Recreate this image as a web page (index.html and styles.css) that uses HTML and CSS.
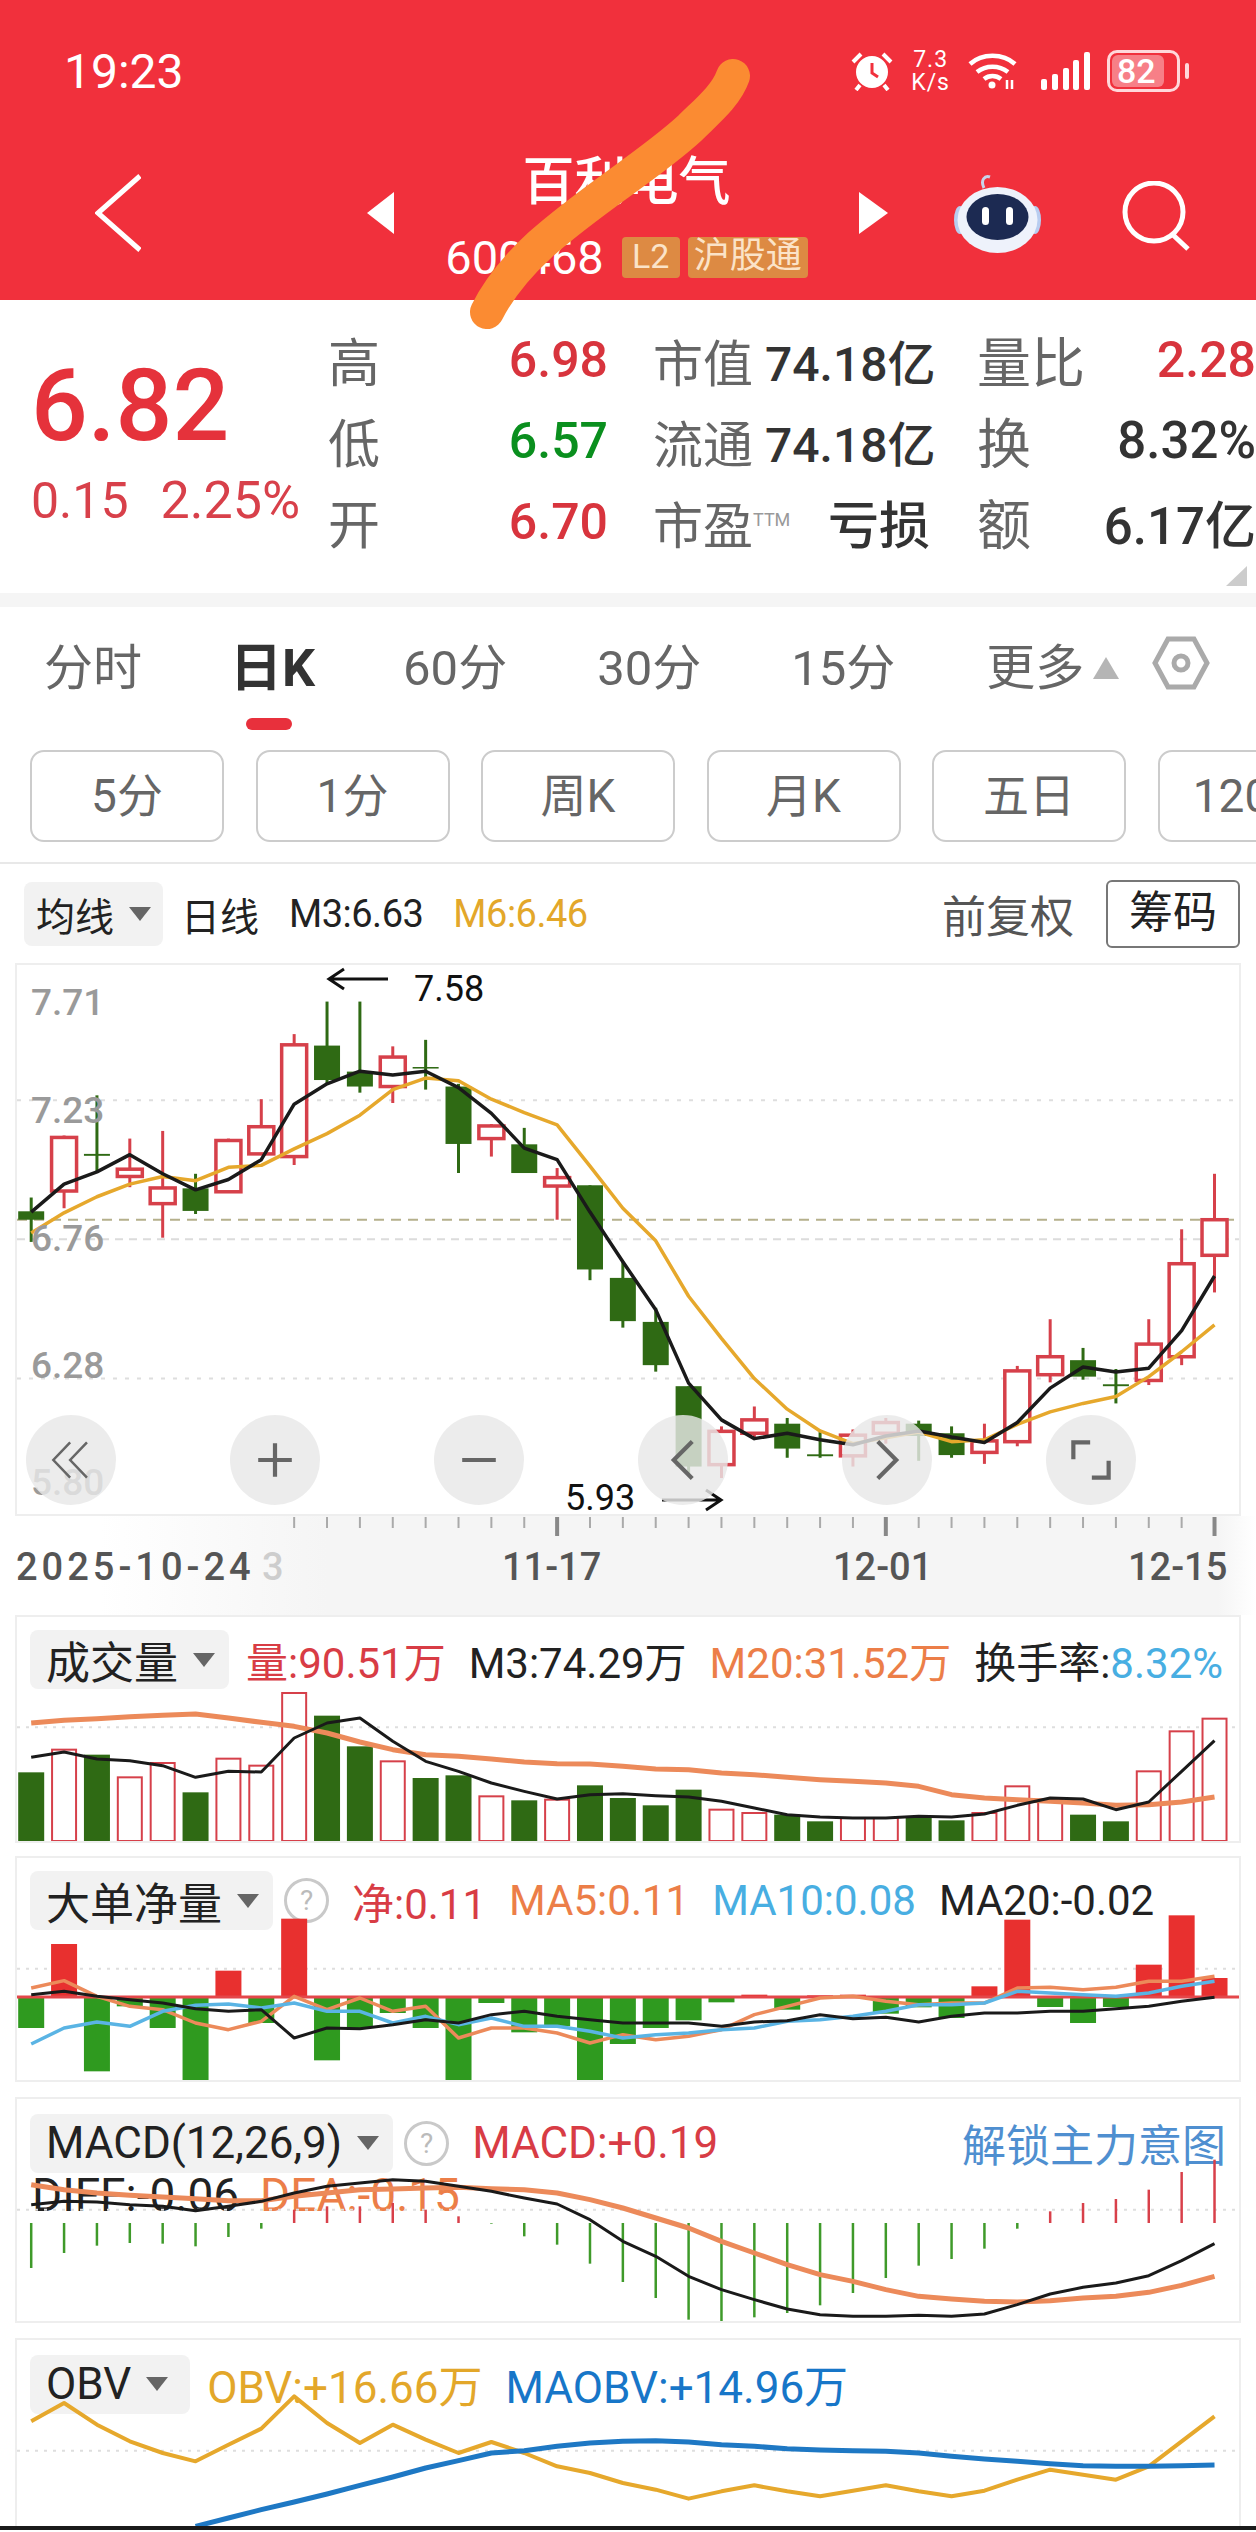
FILE: index.html
```html
<!DOCTYPE html>
<html lang="zh-CN">
  <head>
    <meta charset="UTF-8" />
    <meta name="viewport" content="width=device-width, initial-scale=1.0" />
    <title>百利电气</title>
    <link rel="stylesheet" href="styles.css">
  </head>

  <body>
    <header class="topbar">
      <div class="status">
        <span class="clock">19:23</span>
        <div class="status-icons">
          <svg class="ic-alarm" viewBox="0 0 44 40" fill="none" stroke="#fff">
            <circle cx="22" cy="21" r="14" stroke-width="4" fill="#fff" />
            <path d="M22 12v10l6 4" stroke="#f1303c" stroke-width="3" />
            <path d="M3 11l8-8M41 11l-8-8M10 34l-4 5M34 34l4 5" stroke-width="4" />
          </svg>
          <div class="speed"><span>7.3</span><span>K/s</span></div>
          <svg class="ic-wifi" viewBox="0 0 51 38" fill="none" stroke="#fff" stroke-width="4.5">
            <path d="M3 12C15 1 36 1 48 12" />
            <path d="M10 20c9-7 22-7 31 0" />
            <path d="M17 27c5-4 12-4 17 0" />
            <circle cx="25" cy="33" r="3.5" fill="#fff" stroke="none" />
            <path d="M40 28v9M45 28v9" stroke-width="2.5" />
          </svg>
          <svg class="ic-signal" viewBox="0 0 49 38" fill="#fff">
            <rect x="0" y="27" width="6" height="11" rx="2" />
            <rect x="11" y="22" width="6" height="16" rx="2" />
            <rect x="22" y="16" width="6" height="22" rx="2" />
            <rect x="32" y="8" width="6" height="30" rx="2" />
            <rect x="43" y="0" width="6" height="38" rx="2" />
          </svg>
          <div class="battery"><span class="battery-level">82</span></div>
        </div>
      </div>

      <nav class="nav">
        <svg class="back" viewBox="0 0 46 78" fill="none" stroke="#fff" stroke-width="5">
          <path d="M45 2L3 39l42 37" />
        </svg>
        <span class="arrow arrow-prev"></span>
        <div class="stock">
          <div class="stock-name">百利电气</div>
          <div class="stock-sub">
            <span class="stock-code">600468</span>
            <span class="badge badge-l2">L2</span>
            <span class="badge badge-hk">沪股通</span>
          </div>
        </div>
        <span class="arrow arrow-next"></span>
        <svg class="robot" viewBox="0 0 89 79">
          <path d="M31 14C27 6 32 1 37 3" fill="none" stroke="#c9d3ea" stroke-width="3" />
          <ellipse cx="7" cy="46" rx="6" ry="14" fill="#b8cdf0" />
          <ellipse cx="82" cy="46" rx="6" ry="14" fill="#b8cdf0" />
          <ellipse cx="44.5" cy="46" rx="40" ry="33" fill="#eef2fb" />
          <ellipse cx="44.5" cy="43" rx="31" ry="23" fill="#1c2a52" />
          <rect x="29" y="33" width="7" height="18" rx="3.5" fill="#fff" />
          <rect x="53" y="33" width="7" height="18" rx="3.5" fill="#fff" />
        </svg>
        <svg class="search" viewBox="0 0 68 70" fill="none" stroke="#fff" stroke-width="5">
          <circle cx="32" cy="31" r="29" />
          <path d="M50 53l16 15" />
        </svg>
      </nav>
    </header>

    <section class="quote">
      <div class="price-box">
        <div class="price">6.82</div>
        <div class="change"><span>0.15</span><span class="pct">2.25%</span></div>
      </div>
      <div class="stats">
        <span class="k">高</span><span class="v up">6.98</span>
        <span class="k k2">市值</span><span class="v">74.18亿</span>
        <span class="k k3">量比</span><span class="v up">2.28</span>

        <span class="k">低</span><span class="v down">6.57</span>
        <span class="k k2">流通</span><span class="v">74.18亿</span>
        <span class="k k3">换</span><span class="v over">8.32%</span>

        <span class="k">开</span><span class="v up">6.70</span>
        <span class="k k2">市盈<sup class="ttm">TTM</sup></span><span class="v v-big">亏损</span>
        <span class="k k3">额</span><span class="v v-big">6.17亿</span>
      </div>
      <span class="corner"></span>
    </section>

    <div class="band"></div>

    <div class="tabs">
      <span class="tab">分时</span>
      <span class="tab tab-on">日K</span>
      <span class="tab">60分</span>
      <span class="tab">30分</span>
      <span class="tab">15分</span>
      <span class="tab tab-more">更多<i class="more-tri"></i></span>
      <svg class="hex" viewBox="0 0 58 54" fill="none" stroke="#aaa" stroke-width="5">
        <path d="M16 3h26l13 24-13 24H16L3 27z" />
        <circle cx="29" cy="27" r="7" />
      </svg>
    </div>

    <div class="periods">
      <span class="period">5分</span>
      <span class="period">1分</span>
      <span class="period">周K</span>
      <span class="period">月K</span>
      <span class="period">五日</span>
      <span class="period">120分</span>
    </div>

    <div class="ma-head">
      <span class="tag tag-ma">均线<i class="tri"></i></span>
      <span class="ma-day">日线</span>
      <span class="ma-val">M3:6.63</span>
      <span class="ma-val c-gold">M6:6.46</span>
      <span class="ma-right">前复权</span>
      <span class="chips">筹码</span>
    </div>

    <div class="kchart">
      <svg id="kline" class="plot" width="1222" height="553" viewBox="17 967 1222 553"></svg>
      <div class="floaters">
        <span class="floater">
          <svg viewBox="0 0 50 50" fill="none" stroke="#666" stroke-width="3"><path d="M24 4L4 25l20 21M44 4L24 25l20 21" /></svg>
        </span>
        <span class="floater">
          <svg viewBox="0 0 50 50" fill="none" stroke="#666" stroke-width="5"><path d="M5 25h40M25 5v40" /></svg>
        </span>
        <span class="floater">
          <svg viewBox="0 0 50 50" fill="none" stroke="#666" stroke-width="5"><path d="M5 25h40" /></svg>
        </span>
        <span class="floater">
          <svg viewBox="0 0 50 50" fill="none" stroke="#666" stroke-width="5"><path d="M36 3L14 25l22 22" /></svg>
        </span>
        <span class="floater">
          <svg viewBox="0 0 50 50" fill="none" stroke="#666" stroke-width="5"><path d="M14 3l22 22-22 22" /></svg>
        </span>
        <span class="floater">
          <svg viewBox="0 0 50 50" fill="none" stroke="#666" stroke-width="5"><path d="M4 24V4h20M46 26v20H26" /></svg>
        </span>
      </div>
    </div>

    <div class="axis">
      <svg id="ticks" width="1256" height="99" viewBox="0 1518 1256 99"></svg>
    </div>

    <section class="panel panel-vol">
      <div class="panel-head">
        <span class="tag">成交量<i class="tri"></i></span>
        <span class="c-red">量:90.51万</span>
        <span class="c-black">M3:74.29万</span>
        <span class="c-orange">M20:31.52万</span>
        <span class="c-black">换手率:<span class="c-sky">8.32%</span></span>
      </div>
      <svg id="vol" class="plot" width="1222" height="224" viewBox="17 1619 1222 224"></svg>
    </section>

    <section class="panel panel-net">
      <div class="panel-head">
        <span class="tag">大单净量<i class="tri"></i></span>
        <span class="help">?</span>
        <span class="c-red">净:0.11</span>
        <span class="c-orange">MA5:0.11</span>
        <span class="c-sky">MA10:0.08</span>
        <span class="c-black">MA20:-0.02</span>
      </div>
      <svg id="net" class="plot" width="1222" height="222" viewBox="17 1860 1222 222"></svg>
    </section>

    <section class="panel panel-macd">
      <div class="panel-head">
        <span class="tag">MACD(12,26,9)<i class="tri"></i></span>
        <span class="help">?</span>
        <span class="c-red head-big">MACD:+0.19</span>
        <span class="unlock">解锁主力意图</span>
      </div>
      <div class="macd-sub">
        <span class="c-black">DIFF:-0.06</span>
        <span class="c-orange">DEA:-0.15</span>
      </div>
      <svg id="macd" class="plot" width="1222" height="222" viewBox="17 2101 1222 222"></svg>
    </section>

    <section class="panel panel-obv">
      <div class="panel-head">
        <span class="tag tag-obv">OBV<i class="tri"></i></span>
        <span class="c-gold head-big">OBV:+16.66万</span>
        <span class="c-blue head-big">MAOBV:+14.96万</span>
      </div>
      <svg id="obv" class="plot" width="1222" height="186" viewBox="17 2342 1222 186"></svg>
    </section>

    <div class="home-edge"></div>

    <!-- marker stroke drawn over the stock name -->
    <svg class="scribble" width="800" height="340" viewBox="0 0 800 340" fill="none">
      <path d="M733 76C726 96 706 112 690 128C650 165 590 200 540 245C515 268 498 290 487 312" stroke="#fb8b32" stroke-width="34" stroke-linecap="round" />
    </svg>

    <script src="script.js"></script>
  </body>
</html>
```

FILE: styles.css
```css
* {
  box-sizing: border-box;
  font-family: Roboto, "Noto Sans CJK SC", sans-serif;
}

html,
body {
  margin: 0;
  width: 1256px;
  height: 2532px;
  overflow: hidden;
  background: #fff;
}

body {
  position: relative;
}

.scribble {
  position: absolute;
  left: 0;
  top: 0;
}

/* red header */
.topbar {
  height: 300px;
  background: #f1303c;
  color: #fff;
}

.status {
  height: 142px;
  padding: 0 76px 0 64px;
  display: flex;
  align-items: center;
  justify-content: space-between;
}

.clock {
  font-size: 48px;
}

.status-icons {
  display: flex;
  align-items: center;
  gap: 17px;
}

.ic-alarm {
  width: 44px;
  height: 40px;
}

.speed {
  display: flex;
  flex-direction: column;
  align-items: center;
  font-size: 23px;
  line-height: 23px;
  letter-spacing: 1px;
}

.ic-wifi {
  width: 51px;
  height: 38px;
}

.ic-signal {
  width: 49px;
  height: 38px;
  margin-left: 6px;
}

.battery {
  width: 73px;
  height: 42px;
  border: 3px solid #ffd7da;
  border-radius: 10px;
  padding: 2px;
  position: relative;
}

.battery::after {
  content: "";
  position: absolute;
  right: -12px;
  top: 10px;
  width: 4px;
  height: 16px;
  border-radius: 2px;
  background: #ffd7da;
}

.battery-level {
  display: block;
  height: 100%;
  width: 82%;
  border-radius: 6px;
  background: #f77f87;
  font-size: 34px;
  line-height: 32px;
  font-weight: 500;
  white-space: nowrap;
  padding-left: 5px;
}

.nav {
  height: 158px;
  padding-bottom: 16px;
  display: flex;
  align-items: center;
}

.back {
  width: 46px;
  height: 78px;
  margin-left: 95px;
}

.arrow {
  width: 0;
  height: 0;
  border-top: 21px solid transparent;
  border-bottom: 21px solid transparent;
}

.arrow-prev {
  margin-left: 226px;
  border-right: 27px solid #fff;
}

.arrow-next {
  border-left: 29px solid #fff;
}

.stock {
  width: 465px;
  align-self: flex-start;
  padding-top: 13px;
  display: flex;
  flex-direction: column;
  align-items: center;
}

.stock-name {
  font-size: 52px;
  line-height: 56px;
  font-weight: 500;
}

.stock-sub {
  margin-top: 26px;
  height: 41px;
  display: flex;
  align-items: center;
  gap: 8px;
}

.stock-code {
  font-size: 47px;
  margin-right: 10px;
}

.badge {
  height: 41px;
  line-height: 39px;
  font-size: 34px;
  text-align: center;
  color: #fbe3c8;
  background: #dd8a43;
  border-radius: 4px;
}

.badge-l2 {
  width: 58px;
}

.badge-hk {
  width: 120px;
  font-size: 36px;
}

.robot {
  width: 89px;
  height: 79px;
  margin-left: 65px;
}

.search {
  width: 68px;
  height: 70px;
  margin-left: 80px;
  margin-top: 6px;
}

/* quote numbers */
.quote {
  position: relative;
  height: 293px;
  display: flex;
  overflow: hidden;
}

.price-box {
  width: 328px;
  padding: 56px 0 0 31px;
  color: #e5323b;
}

.price {
  font-size: 100px;
  line-height: 100px;
  font-weight: 500;
}

.change {
  margin-top: 20px;
  display: flex;
  gap: 32px;
  font-size: 50px;
  line-height: 50px;
  color: #d8404a;
}

.pct {
  font-size: 52px;
}

.stats {
  margin-top: 19px;
  display: grid;
  grid-template-columns: 72px 208px 157px 165px 156px 170px;
  grid-auto-rows: 81px;
  align-items: center;
  font-size: 48px;
  white-space: nowrap;
}

.k {
  font-size: 52px;
  color: #666;
}

.k2 {
  padding-left: 45px;
  font-size: 50px;
}

.k3 {
  padding-left: 47px;
  font-size: 54px;
}

.v {
  text-align: right;
  color: #333;
  font-weight: 500;
}

.v-big {
  font-size: 51px;
}

.up {
  font-size: 50px;
  color: #d8343d;
}

.down {
  font-size: 50px;
  color: #0a8f1e;
}

.over {
  font-size: 51px;
}

.ttm {
  font-size: 18px;
  color: #999;
  vertical-align: 18px;
  line-height: 0;
}

.corner {
  position: absolute;
  right: 9px;
  bottom: 7px;
  border-left: 21px solid transparent;
  border-bottom: 20px solid #ccc;
}

.band {
  height: 14px;
  background: #f5f5f5;
}

/* period tabs */
.tabs {
  height: 122px;
  padding: 0 0 10px 44px;
  display: flex;
  align-items: center;
  gap: 90px;
  font-size: 49px;
  color: #666;
}

.tab {
  position: relative;
  white-space: nowrap;
}

.tab-on {
  margin-left: -2px;
  margin-right: -2px;
  font-size: 52px;
  color: #333;
  font-weight: 700;
}

.tab-on::after {
  content: "";
  position: absolute;
  left: 16px;
  top: 92px;
  width: 46px;
  height: 12px;
  border-radius: 6px;
  background: #e8303c;
}

.tab-more {
  margin-left: 1px;
}

.more-tri {
  display: inline-block;
  margin-left: 9px;
  vertical-align: 6px;
  border-left: 13px solid transparent;
  border-right: 13px solid transparent;
  border-bottom: 22px solid #b5b5b5;
}

.hex {
  width: 58px;
  height: 54px;
  margin-left: -57px;
}

.periods {
  margin-top: 21px;
  padding-left: 30px;
  display: flex;
  gap: 31.5px;
  overflow: hidden;
}

.period {
  flex: none;
  width: 194px;
  height: 92px;
  line-height: 88px;
  text-align: center;
  font-size: 46px;
  color: #666;
  border: 2px solid #ccc;
  border-radius: 14px;
}

/* moving average head row */
.ma-head {
  margin-top: 20px;
  border-top: 2px solid #e8e8e8;
  padding: 17px 16px 0 24px;
  height: 85px;
  display: flex;
  align-items: center;
  color: #222;
}

.tag {
  display: flex;
  align-items: center;
  flex: none;
  height: 59px;
  padding: 0 14px 0 16px;
  margin-right: -6px;
  background: #f2f2f2;
  border-radius: 8px;
  font-size: 44px;
  color: #222;
}

.tag-ma {
  width: 139px;
  height: 64px;
  margin-right: 0;
  padding: 0 0 0 12px;
  font-size: 39px;
}

.tag-obv {
  padding-right: 22px;
}

.tri {
  margin-left: 15px;
  border-left: 11px solid transparent;
  border-right: 11px solid transparent;
  border-top: 14px solid #666;
}

.ma-day {
  margin-left: 18px;
  font-size: 39px;
}

.ma-val {
  margin-left: 30px;
  font-size: 38px;
  letter-spacing: -0.5px;
}

.ma-right {
  margin-left: auto;
  font-size: 44px;
  color: #555;
}

.chips {
  margin-left: 32px;
  width: 134px;
  height: 68px;
  line-height: 62px;
  text-align: center;
  font-size: 44px;
  border: 2px solid #777;
  border-radius: 6px;
}

/* charts */
.kchart {
  position: relative;
  margin: 16px 15px 0;
  height: 553px;
  border: 2px solid #eee;
}

.plot {
  position: absolute;
  left: 0;
  top: 0;
}

.floaters {
  position: absolute;
  left: 9px;
  top: 450px;
  display: flex;
  gap: 114px;
}

.floater {
  width: 90px;
  height: 90px;
  border-radius: 50%;
  background: rgba(232, 232, 232, 0.82);
  display: flex;
  align-items: center;
  justify-content: center;
}

.floater svg {
  width: 42px;
  height: 48px;
}

.axis {
  height: 99px;
  background: linear-gradient(90deg, #fff 8%, #f5f5f5 26%, #f5f5f5 97%, #fff);
}

.axis svg {
  display: block;
}

.panel {
  position: relative;
  margin: 0 15px;
  border: 2px solid #eee;
  background: #fff;
  overflow: hidden;
}

.panel-vol {
  height: 228px;
}

.panel-net {
  height: 226px;
  margin-top: 13px;
}

.panel-macd {
  height: 226px;
  margin-top: 15px;
}

.panel-obv {
  height: 188px;
  margin-top: 15px;
  border-bottom: 0;
}

.panel-head {
  padding: 12px 0 0 13px;
  display: flex;
  align-items: center;
  gap: 23px;
  font-size: 42px;
  white-space: nowrap;
}

.head-big {
  font-size: 44px;
}

.help {
  flex: none;
  width: 45px;
  height: 45px;
  margin: 0 0 0 -6px;
  border: 3px solid #c9c9c9;
  border-radius: 50%;
  font-size: 28px;
  line-height: 39px;
  text-align: center;
  color: #bbb;
}

.unlock {
  margin-left: auto;
  margin-right: 13px;
  font-size: 44px;
  color: #4f8fd0;
}

.macd-sub {
  position: relative;
  padding-left: 15px;
  margin-top: 2px;
  display: flex;
  gap: 21px;
  font-size: 46px;
  line-height: 36px;
}

.c-red {
  color: #d83c45;
}

.c-black {
  color: #222;
}

.c-orange {
  color: #ec7e48;
}

.c-sky {
  color: #48aee2;
}

.c-gold {
  color: #e3a72a;
}

.c-blue {
  color: #1776c8;
}

.chart-label {
  font-size: 37px;
  fill: #9a9a9a;
  font-weight: 500;
}

.chart-note {
  font-size: 36px;
  fill: #111;
}

.date-label {
  font-size: 38px;
  fill: #555;
  font-weight: 500;
}

.date-wide {
  letter-spacing: 4px;
}

.home-edge {
  height: 4px;
  background: #1a1a1a;
}
```

FILE: script.js
```js
// shared x position of every trading day
const dayX = (i) => 31.2 + 32.87 * i;

const RED = "#d6404a";
const GREEN = "#2f6a14";
const BLACK = "#1a1a1a";
const GOLD = "#e6a82c";
const ORANGE = "#ec8a5a";
const SKY = "#5ab4e4";

function add(svg, name, attrs, text) {
  const el = document.createElementNS("http://www.w3.org/2000/svg", name);
  for (const key in attrs) {
    el.setAttribute(key, attrs[key]);
  }
  if (text) el.textContent = text;
  svg.appendChild(el);
  return el;
}

function hLine(svg, y, color, dash) {
  add(svg, "line", { x1: 17, x2: 1239, y1: y, y2: y, stroke: color, "stroke-width": 2, "stroke-dasharray": dash });
}

// ys are given per day, first points can be skipped with start
function curve(svg, ys, toY, color, width, start = 0) {
  const points = ys.map((v, i) => `${dayX(i + start)},${toY(v)}`).join(" ");
  add(svg, "polyline", { points, fill: "none", stroke: color, "stroke-width": width, "stroke-linejoin": "round" });
}

/* ---------- day candles ---------- */
const kline = document.querySelector("#kline");
const kY = (v) => 950 + v / 2.613;

hLine(kline, kY(398), "#dedede", "4 8");
hLine(kline, kY(761), "#dcdcdc", "8 6");
hLine(kline, kY(1125), "#dedede", "4 8");
hLine(kline, kY(710), "#b5b08c", "10 7");

// [colour, wick top, body top, body bottom, wick bottom]
const candles = [
  ["g", 652, 688, 710, 768], ["r", 490, 495, 635, 680], ["g", 385, 538, 543, 585],
  ["r", 498, 578, 597, 625], ["r", 478, 627, 668, 757], ["g", 590, 628, 687, 695],
  ["r", 498, 503, 637, 637], ["r", 395, 467, 538, 540], ["r", 225, 253, 545, 567],
  ["g", 140, 255, 345, 355], ["g", 140, 323, 362, 378], ["r", 257, 285, 362, 405],
  ["g", 240, 311, 315, 370], ["g", 355, 362, 512, 588], ["r", 460, 465, 498, 545],
  ["g", 470, 513, 588, 588], ["r", 575, 600, 622, 710], ["g", 620, 620, 840, 868],
  ["g", 820, 862, 975, 992], ["g", 940, 977, 1090, 1107], ["g", 1145, 1145, 1355, 1375],
  ["r", 1250, 1263, 1350, 1385], ["r", 1198, 1233, 1268, 1285], ["g", 1228, 1243, 1308, 1332],
  ["g", 1265, 1323, 1328, 1332], ["r", 1258, 1273, 1327, 1355], ["r", 1228, 1240, 1268, 1295],
  ["g", 1235, 1243, 1275, 1340], ["g", 1250, 1268, 1325, 1332], ["r", 1243, 1288, 1318, 1348],
  ["r", 1092, 1105, 1290, 1302], ["r", 970, 1068, 1115, 1135], ["g", 1045, 1077, 1120, 1128],
  ["g", 1100, 1140, 1145, 1190], ["r", 970, 1035, 1130, 1142], ["r", 735, 825, 1068, 1090],
  ["r", 590, 710, 803, 900],
];

candles.forEach(([c, wickTop, top, bottom, wickBottom], i) => {
  const x = dayX(i);
  const color = c === "r" ? RED : GREEN;
  add(kline, "line", { x1: x, x2: x, y1: kY(wickTop), y2: kY(wickBottom), stroke: color, "stroke-width": 3 });
  if (c === "r") {
    add(kline, "rect", { x: x - 12.5, y: kY(top), width: 25, height: kY(bottom) - kY(top), fill: "#fff", stroke: color, "stroke-width": 3.5 });
  } else {
    add(kline, "rect", { x: x - 13, y: kY(top), width: 26, height: kY(bottom) - kY(top), fill: color });
  }
});

curve(kline, [745, 692, 650, 617, 597, 608, 573, 568, 525, 485, 437, 370, 340, 347, 395, 430, 462, 570, 680, 765, 910, 1020, 1125, 1205, 1262, 1295, 1280, 1265, 1290, 1285, 1245, 1212, 1190, 1172, 1120, 1055, 985], kY, GOLD, 3.5);
curve(kline, [690, 617, 585, 540, 590, 632, 605, 553, 408, 355, 322, 332, 322, 365, 432, 523, 553, 690, 820, 945, 1137, 1233, 1282, 1268, 1285, 1298, 1275, 1262, 1278, 1292, 1240, 1150, 1095, 1108, 1098, 1000, 857], kY, BLACK, 3.5);

[["7.71", 1017], ["7.23", 1125], ["6.76", 1253], ["6.28", 1380], ["5.80", 1497]].forEach(([label, y]) => {
  add(kline, "text", { x: 31, y, class: "chart-label" }, label);
});

add(kline, "text", { x: 414, y: 1003, class: "chart-note" }, "7.58");
add(kline, "path", { d: "M388 981H330M344 971l-15 10 15 10", fill: "none", stroke: "#111", "stroke-width": 3 });
add(kline, "text", { x: 565, y: 1512, class: "chart-note" }, "5.93");
add(kline, "path", { d: "M662 1502H720M706 1492l15 10-15 10", fill: "none", stroke: "#111", "stroke-width": 3 });

/* ---------- ticks and dates ---------- */
const ticks = document.querySelector("#ticks");

for (let i = 8; i < 37; i++) {
  const major = i === 16 || i === 26 || i === 36;
  add(ticks, "line", { x1: dayX(i), x2: dayX(i), y1: 1519, y2: major ? 1538 : 1530, stroke: major ? "#888" : "#aaa", "stroke-width": major ? 4 : 2 });
}

[["11-17", 502], ["12-01", 833], ["12-15", 1128]].forEach(([label, x]) => {
  add(ticks, "text", { x, y: 1582, class: "date-label" }, label);
});
add(ticks, "text", { x: 16, y: 1582, class: "date-label date-wide" }, "2025-10-24");
add(ticks, "text", { x: 262, y: 1582, class: "date-label", opacity: 0.25 }, "3");

/* ---------- volume ---------- */
const vol = document.querySelector("#vol");
const sub5Y = (v) => 1600 + v / 3;

hLine(vol, sub5Y(388), "#dedede", "3 6");

const volBars = [
  ["g", 523], ["r", 455], ["g", 470], ["r", 538], ["r", 495], ["g", 583], ["r", 482], ["r", 503], ["r", 285],
  ["g", 353], ["g", 445], ["r", 490], ["g", 540], ["g", 532], ["r", 595], ["g", 607], ["r", 605], ["g", 562],
  ["g", 600], ["g", 622], ["g", 575], ["r", 635], ["r", 645], ["g", 650], ["g", 670], ["r", 660], ["r", 660],
  ["g", 655], ["g", 667], ["r", 645], ["r", 565], ["r", 605], ["g", 650], ["g", 670], ["r", 520], ["r", 400], ["r", 362],
];

volBars.forEach(([c, top], i) => {
  const x = dayX(i);
  const y = sub5Y(top);
  if (c === "r") {
    add(vol, "rect", { x: x - 12, y, width: 24, height: 1843 - y, fill: "#fff", stroke: RED, "stroke-width": 2 });
  } else {
    add(vol, "rect", { x: x - 13, y, width: 26, height: 1843 - y, fill: GREEN });
  }
});

curve(vol, [375, 367, 362, 356, 352, 348, 360, 373, 385, 405, 432, 455, 470, 475, 483, 492, 497, 498, 505, 513, 515, 525, 530, 538, 545, 550, 555, 565, 590, 600, 605, 610, 615, 622, 620, 612, 597], sub5Y, ORANGE, 5);
curve(vol, [478, 462, 483, 488, 503, 538, 520, 522, 420, 375, 360, 430, 490, 520, 555, 580, 603, 590, 587, 593, 597, 610, 630, 650, 657, 660, 660, 655, 657, 648, 622, 600, 603, 635, 612, 520, 428], sub5Y, BLACK, 3);

/* ---------- big order net volume ---------- */
const net = document.querySelector("#net");

hLine(net, sub5Y(1112), "#dedede", "3 6");

const netBars = [1290, 1038, 1420, 1225, 1290, 1460, 1118, 1275, 962, 1387, 1290, 1245, 1290, 1460, 1215, 1303, 1285, 1460, 1338, 1290, 1267, 1213, 1190, 1235, 1192, 1190, 1247, 1228, 1260, 1165, 965, 1227, 1275, 1227, 1100, 952, 1140];

netBars.forEach((end, i) => {
  const up = end < 1197;
  const y = sub5Y(Math.min(end, 1197));
  const h = Math.abs(sub5Y(end) - sub5Y(1197));
  add(net, "rect", { x: dayX(i) - 13, y, width: 26, height: h, fill: up ? "#e8302f" : "#2f9a1f" });
});

add(net, "line", { x1: 17, x2: 1239, y1: 1999, y2: 1999, stroke: "#e4474a", "stroke-width": 3 });

curve(net, [1170, 1148, 1195, 1225, 1235, 1275, 1295, 1270, 1195, 1235, 1200, 1240, 1225, 1320, 1290, 1290, 1305, 1335, 1310, 1325, 1315, 1295, 1250, 1225, 1200, 1195, 1210, 1220, 1215, 1215, 1170, 1168, 1175, 1168, 1150, 1150, 1135], sub5Y, ORANGE, 3.5);
curve(net, [1338, 1290, 1272, 1285, 1240, 1222, 1218, 1230, 1215, 1240, 1240, 1275, 1255, 1280, 1260, 1285, 1285, 1300, 1320, 1310, 1305, 1295, 1290, 1270, 1265, 1255, 1240, 1220, 1220, 1215, 1180, 1185, 1190, 1195, 1185, 1165, 1150], sub5Y, SKY, 3.5);
curve(net, [1190, 1180, 1195, 1205, 1215, 1232, 1240, 1235, 1320, 1290, 1292, 1280, 1265, 1275, 1250, 1240, 1255, 1265, 1275, 1275, 1275, 1285, 1272, 1268, 1250, 1262, 1258, 1272, 1255, 1245, 1245, 1240, 1240, 1232, 1225, 1210, 1198], sub5Y, BLACK, 3);

/* ---------- MACD ---------- */
const macd = document.querySelector("#macd");
const sub6Y = (v) => 2080 + v / 3;

hLine(macd, sub6Y(395), "#dedede", "3 6");

const macdBars = [570, 525, 503, 495, 497, 505, 477, 452, 395, 385, 385, 375, 395, 415, 437, 475, 500, 557, 612, 660, 725, 733, 718, 705, 682, 645, 600, 563, 543, 512, 452, 400, 375, 363, 335, 282, 245];

macdBars.forEach((end, i) => {
  add(macd, "line", { x1: dayX(i), x2: dayX(i), y1: sub6Y(435), y2: sub6Y(end), stroke: end < 435 ? "#d8404a" : "#3f9a2a", "stroke-width": 2.5 });
});

curve(macd, [320, 335, 345, 352, 357, 362, 368, 368, 355, 345, 335, 333, 330, 328, 332, 335, 345, 365, 390, 420, 450, 490, 525, 560, 590, 610, 635, 655, 663, 670, 672, 668, 660, 655, 643, 622, 595], sub6Y, ORANGE, 5);
curve(macd, [380, 370, 372, 380, 385, 398, 385, 370, 345, 325, 315, 305, 310, 325, 340, 360, 378, 425, 490, 535, 595, 635, 665, 693, 710, 715, 715, 712, 715, 708, 680, 648, 628, 615, 593, 548, 497], sub6Y, BLACK, 3);

/* ---------- OBV ---------- */
const obv = document.querySelector("#obv");

hLine(obv, sub6Y(1118), "#dedede", "3 6");

curve(obv, [1030, 975, 1040, 1090, 1125, 1150, 1100, 1052, 955, 1035, 1095, 1040, 1085, 1125, 1092, 1125, 1165, 1185, 1215, 1235, 1262, 1240, 1222, 1240, 1255, 1238, 1222, 1240, 1255, 1238, 1205, 1175, 1190, 1205, 1165, 1090, 1015], sub6Y, GOLD, 4);
curve(obv, [1345, 1320, 1295, 1272, 1248, 1222, 1197, 1170, 1148, 1125, 1118, 1105, 1095, 1090, 1088, 1092, 1100, 1105, 1112, 1116, 1118, 1120, 1125, 1135, 1143, 1150, 1157, 1163, 1165, 1165, 1163, 1161], sub6Y, "#1e78c4", 5, 5);
```
